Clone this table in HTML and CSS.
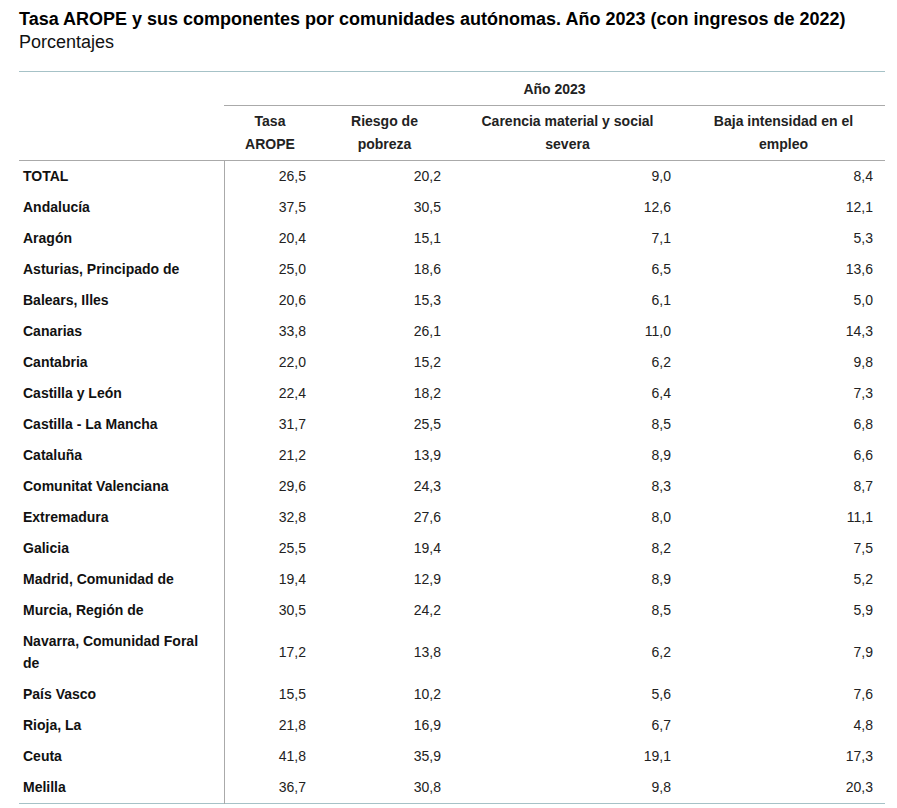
FILE: index.html
```html
<!DOCTYPE html>
<html lang="es">
<head>
<meta charset="utf-8">
<title>Tasa AROPE</title>
<link rel="stylesheet" href="styles.css">
</head>
<body>
<div class="page">
  <h1 class="title">Tasa AROPE y sus componentes por comunidades autónomas. Año 2023 (con ingresos de 2022)</h1>
  <p class="subtitle">Porcentajes</p>
  <table class="data">
    <colgroup>
      <col class="c-label"><col class="c-a"><col class="c-b"><col class="c-c"><col class="c-d">
    </colgroup>
    <thead>
      <tr class="h1">
        <th class="blank"></th>
        <th colspan="4" class="year">Año 2023</th>
      </tr>
      <tr class="h2">
        <th class="blank"></th>
        <th>Tasa<br>AROPE</th>
        <th>Riesgo de<br>pobreza</th>
        <th>Carencia material y social<br>severa</th>
        <th>Baja intensidad en el<br>empleo</th>
      </tr>
    </thead>
    <tbody>
      <tr><th>TOTAL</th><td>26,5</td><td>20,2</td><td>9,0</td><td>8,4</td></tr>
      <tr><th>Andalucía</th><td>37,5</td><td>30,5</td><td>12,6</td><td>12,1</td></tr>
      <tr><th>Aragón</th><td>20,4</td><td>15,1</td><td>7,1</td><td>5,3</td></tr>
      <tr><th>Asturias, Principado de</th><td>25,0</td><td>18,6</td><td>6,5</td><td>13,6</td></tr>
      <tr><th>Balears, Illes</th><td>20,6</td><td>15,3</td><td>6,1</td><td>5,0</td></tr>
      <tr><th>Canarias</th><td>33,8</td><td>26,1</td><td>11,0</td><td>14,3</td></tr>
      <tr><th>Cantabria</th><td>22,0</td><td>15,2</td><td>6,2</td><td>9,8</td></tr>
      <tr><th>Castilla y León</th><td>22,4</td><td>18,2</td><td>6,4</td><td>7,3</td></tr>
      <tr><th>Castilla - La Mancha</th><td>31,7</td><td>25,5</td><td>8,5</td><td>6,8</td></tr>
      <tr><th>Cataluña</th><td>21,2</td><td>13,9</td><td>8,9</td><td>6,6</td></tr>
      <tr><th>Comunitat Valenciana</th><td>29,6</td><td>24,3</td><td>8,3</td><td>8,7</td></tr>
      <tr><th>Extremadura</th><td>32,8</td><td>27,6</td><td>8,0</td><td>11,1</td></tr>
      <tr><th>Galicia</th><td>25,5</td><td>19,4</td><td>8,2</td><td>7,5</td></tr>
      <tr><th>Madrid, Comunidad de</th><td>19,4</td><td>12,9</td><td>8,9</td><td>5,2</td></tr>
      <tr><th>Murcia, Región de</th><td>30,5</td><td>24,2</td><td>8,5</td><td>5,9</td></tr>
      <tr><th>Navarra, Comunidad Foral<br>de</th><td>17,2</td><td>13,8</td><td>6,2</td><td>7,9</td></tr>
      <tr><th>País Vasco</th><td>15,5</td><td>10,2</td><td>5,6</td><td>7,6</td></tr>
      <tr><th>Rioja, La</th><td>21,8</td><td>16,9</td><td>6,7</td><td>4,8</td></tr>
      <tr><th>Ceuta</th><td>41,8</td><td>35,9</td><td>19,1</td><td>17,3</td></tr>
      <tr><th>Melilla</th><td>36,7</td><td>30,8</td><td>9,8</td><td>20,3</td></tr>
    </tbody>
  </table>
</div>
</body>
</html>
```
FILE: styles.css
```css
html, body {
  margin: 0;
  padding: 0;
  background: #ffffff;
}
body {
  font-family: "Liberation Sans", Arial, sans-serif;
  color: #111111;
}
.page {
  padding: 8px 12px 0 19px;
}
.title {
  margin: 0;
  font-size: 18px;
  line-height: 22px;
  font-weight: bold;
  color: #000000;
}
.subtitle {
  margin: 0;
  padding-top: 2px;
  font-size: 18px;
  line-height: 21px;
  color: #111111;
}
.data {
  margin-top: 18px;
  width: 866px;
  border-collapse: collapse;
  table-layout: fixed;
  font-size: 14px;
  color: #222222;
  border-top: 1px solid #a6c2c7;
  border-bottom: 1px solid #a6c2c7;
}
.c-label { width: 205px; }
.c-a { width: 92px; }
.c-b { width: 137px; }
.c-c { width: 229px; }
.c-d { width: 203px; }
.data th, .data td {
  padding: 0;
  vertical-align: middle;
}
.data .h1 th {
  height: 32px;
  font-weight: bold;
  text-align: center;
  line-height: 20px;
  padding-top: 1px;
}
.data .h1 .year {
  border-bottom: 1px solid #aaaaaa;
}
.data .h2 th {
  height: 54px;
  font-weight: bold;
  text-align: center;
  line-height: 23px;
  border-bottom: 1px solid #aaaaaa;
}
.data tbody th {
  text-align: left;
  font-weight: bold;
  padding: 4px 4px 5px 4px;
  line-height: 22px;
  height: 22px;
  border-right: 1px solid #aaaaaa;
  color: #111111;
}
.data tbody td {
  text-align: right;
  padding: 4px 12px 5px 4px;
  line-height: 22px;
  height: 22px;
  color: #222222;
}
.data tbody td:nth-child(2) { padding-right: 10px; }
.data tbody td:nth-child(3) { padding-right: 12px; }
.data tbody td:nth-child(4) { padding-right: 11px; }
```
